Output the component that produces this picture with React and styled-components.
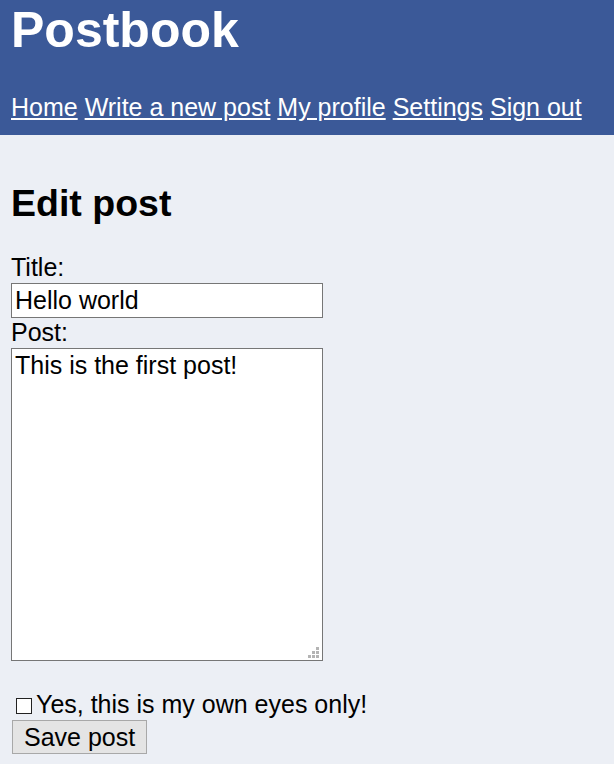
import styled, { createGlobalStyle } from 'styled-components';

const GlobalStyle = createGlobalStyle`
  html, body {
    margin: 0;
    padding: 0;
    background: #eceff5;
  }
  body {
    font-family: "Liberation Sans", Arial, sans-serif;
    font-size: 25px;
    color: #000;
  }
`;

const Header = styled.header`
  background: #3b5998;
  padding: 2px 11px 14px;
  color: #fff;
`;

const Brand = styled.h1`
  margin: 0;
  font-size: 50px;
  line-height: 56px;
  font-weight: bold;
`;

const Nav = styled.nav`
  margin-top: 35px;
  line-height: 28px;
  white-space: nowrap;
`;

const NavLink = styled.a`
  color: #fff;
  text-decoration: underline;
`;

const Main = styled.main`
  padding: 45px 11px 0;
`;

const Heading = styled.h2`
  margin: 0 0 27px;
  font-size: 37.5px;
  line-height: 46px;
  font-weight: bold;
`;

const Form = styled.form`
  display: flex;
  flex-direction: column;
  align-items: flex-start;
`;

const Label = styled.label`
  line-height: 29px;
  margin-bottom: 1px;
`;

const TextInput = styled.input`
  box-sizing: border-box;
  width: 312px;
  height: 35px;
  margin: 0;
  padding: 1px 3px;
  border: 1px solid #767676;
  background: #fff;
  font: inherit;
  color: #000;
  outline: none;
`;

// grip dots drawn as small gradient squares in the corner
const dot = 'linear-gradient(#b4b4b4, #b4b4b4)';

const TextArea = styled.textarea`
  box-sizing: border-box;
  width: 312px;
  height: 313px;
  margin: 0;
  padding: 2px 3px;
  border: 1px solid #767676;
  background-color: #fff;
  background-image: ${dot}, ${dot}, ${dot}, ${dot}, ${dot}, ${dot};
  background-size: 3px 3px;
  background-repeat: no-repeat;
  background-position:
    right 3px bottom 2px,
    right 7px bottom 2px,
    right 11px bottom 2px,
    right 3px bottom 6px,
    right 7px bottom 6px,
    right 3px bottom 10px;
  resize: none;
  font: inherit;
  line-height: 29px;
  color: #000;
  outline: none;
`;

const CheckRow = styled.label`
  display: flex;
  align-items: center;
  margin-top: 29px;
  line-height: 29px;
`;

const Check = styled.input`
  appearance: none;
  box-sizing: border-box;
  width: 16px;
  height: 16px;
  margin: 3px 4px 0 5px;
  border: 1px solid #222;
  background: #fff;
`;

const SaveButton = styled.button`
  box-sizing: border-box;
  height: 34px;
  margin: 1px 0 0 1px;
  padding: 0 11px;
  border: 1px solid #a8a8a8;
  background: #e4e4e4;
  font: inherit;
  line-height: 30px;
  color: #000;
`;

const links = ['Home', 'Write a new post', 'My profile', 'Settings', 'Sign out'];

export default function App() {
  return (
    <>
      <GlobalStyle />
      <Header>
        <Brand>Postbook</Brand>
        <Nav>
          {links.map((l, i) => (
            <span key={l}>
              <NavLink href="#">{l}</NavLink>
              {i < links.length - 1 && ' '}
            </span>
          ))}
        </Nav>
      </Header>
      <Main>
        <Heading>Edit post</Heading>
        <Form onSubmit={(e) => e.preventDefault()}>
          <Label htmlFor="title">Title:</Label>
          <TextInput id="title" type="text" defaultValue="Hello world" />
          <Label htmlFor="post">Post:</Label>
          <TextArea id="post" defaultValue="This is the first post!" />
          <CheckRow>
            <Check type="checkbox" />
            Yes, this is my own eyes only!
          </CheckRow>
          <SaveButton type="submit">Save post</SaveButton>
        </Form>
      </Main>
    </>
  );
}
